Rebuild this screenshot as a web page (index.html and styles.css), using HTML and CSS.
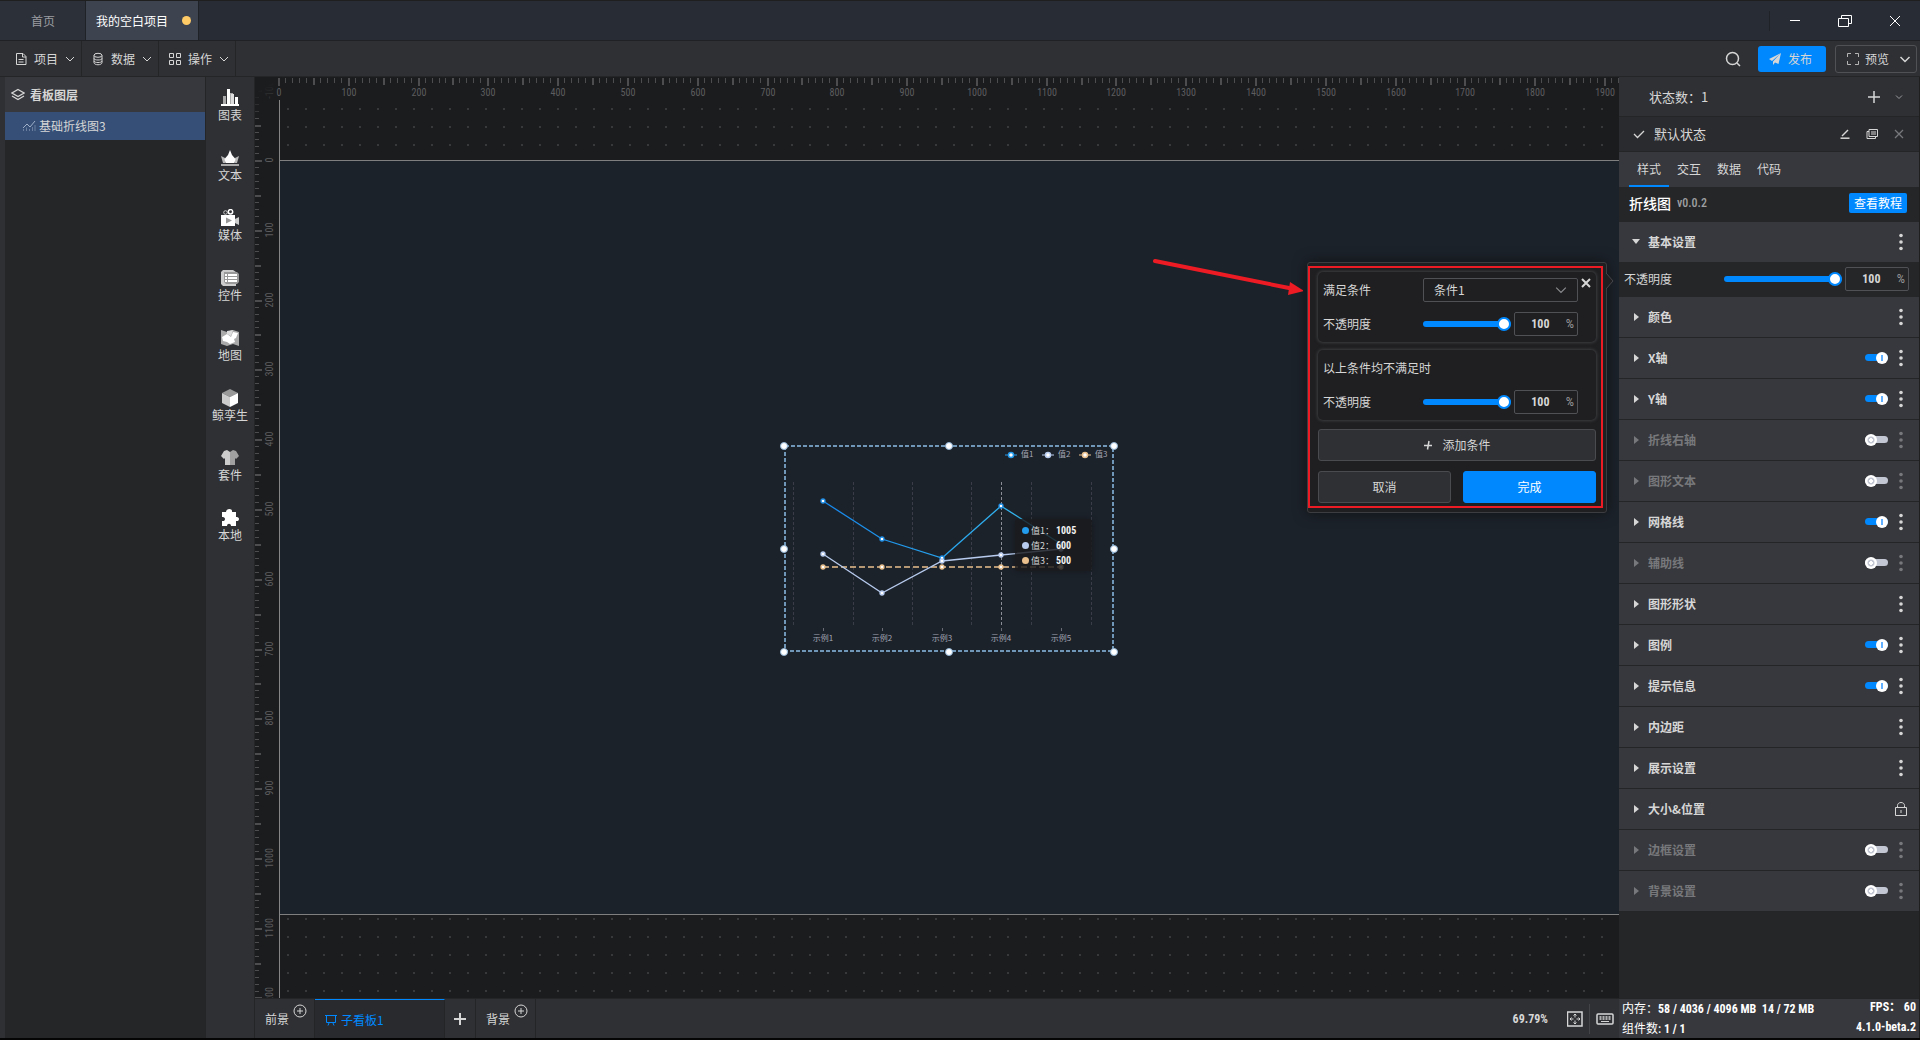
FILE: index.html
```html
<!DOCTYPE html>
<html lang="zh-CN">
<head>
<meta charset="utf-8">
<title>我的空白项目</title>
<link rel="stylesheet" href="styles.css">
</head>
<body>
<svg class="defs" width="0" height="0" aria-hidden="true">
  <symbol id="chevron" viewBox="0 0 10 10"><path d="M1 3l4 4 4-4" fill="none" stroke="currentColor"/></symbol>
  <symbol id="circle-plus" viewBox="0 0 14 14"><path d="M7 4v6M4 7h6" fill="none" stroke="currentColor"/><circle cx="7" cy="7" r="6" fill="none" stroke="currentColor"/></symbol>
  <symbol id="kebab" viewBox="0 0 4 18"><g fill="currentColor"><circle cx="2" cy="2.500" r="1.800"/><circle cx="2" cy="9" r="1.800"/><circle cx="2" cy="15.500" r="1.800"/></g></symbol>
</svg>

<header class="titlebar">
  <nav class="project-tabs">
    <a class="project-tab home" href="#">首页</a>
    <a class="project-tab active" href="#">我的空白项目<span class="unsaved"></span></a>
  </nav>
  <div class="window-buttons">
    <button aria-label="最小化"><svg width="14" height="14"><path d="M2 6.500h10" stroke="currentColor"/></svg></button>
    <button aria-label="还原"><svg width="16" height="14"><path d="M1.500 4.500h10v8h-10zM4.500 4v-2.500h10v8h-3" fill="none" stroke="currentColor"/></svg></button>
    <button aria-label="关闭"><svg width="14" height="14"><path d="M2 2l10 10M12 2L2 12" stroke="currentColor"/></svg></button>
  </div>
</header>

<div class="menubar">
  <button class="menu"><svg width="12" height="14"><path d="M1.500 1.500h6.500l3 3v8h-9.500zM7.500 1.500v3.500h3.500M3.500 7.500h5M3.500 10h5" fill="none" stroke="currentColor"/></svg>项目<svg width="10" height="10"><use href="#chevron"/></svg></button>
  <button class="menu"><svg width="12" height="14"><path d="M2 3.500v7c0 3 8 3 8 0v-7M2 6.500c0 2 8 2 8 0M2 9c0 2 8 2 8 0" fill="none" stroke="currentColor"/><ellipse cx="6" cy="3.300" rx="4" ry="2" fill="none" stroke="currentColor"/></svg>数据<svg width="10" height="10"><use href="#chevron"/></svg></button>
  <button class="menu"><svg width="12" height="12"><path d="M.5.500h4v4h-4zM7.500.500h4v4h-4zM.5 7.500h4v4h-4zM7.500 7.500h4v4h-4z" fill="none" stroke="currentColor"/></svg>操作<svg width="10" height="10"><use href="#chevron"/></svg></button>
  <div class="menubar-actions">
    <button class="search" aria-label="搜索"><svg width="18" height="18"><circle cx="8.500" cy="8.500" r="6" fill="none" stroke="currentColor" stroke-width="1.500"/><path d="M13 13l3 3" stroke="currentColor" stroke-width="1.500"/></svg></button>
    <button class="publish"><svg width="12" height="12"><path d="M12 0L0 6l3 2zM12 0L4 8.500V12l2-2.500 3.500 1.500z" fill="currentColor"/></svg>发布</button>
    <button class="preview"><svg width="12" height="12"><path d="M.5 4V.5H4M8 .5h3.500V4M11.500 8v3.500H8M4 11.500H.5V8" fill="none" stroke="currentColor" opacity=".8"/></svg>预览<svg class="preview-chevron" width="12" height="12"><path d="M1.500 4L6 8.500 10.500 4" fill="none" stroke="currentColor" stroke-width="1.500"/></svg></button>
  </div>
</div>

<div class="workspace">
  <aside class="layers">
    <h2 class="layers-title"><svg width="14" height="14"><path d="M7 1.500L13 5 7 8.500 1 5zM1 8l6 3.500L13 8" fill="none" stroke="currentColor" stroke-width="1.300"/></svg>看板图层</h2>
    <a class="layer" href="#"><svg width="14" height="12"><path d="M1 8l4-4 3 3 5-6" fill="none" stroke="currentColor"/><path d="M1.500 11V9M4.500 11V7.500M7.500 11V9M10.500 11V7M13 11V5" stroke="currentColor" opacity=".5"/></svg>基础折线图3</a>
  </aside>

  <nav class="toolbox">
    <button class="tool"><svg width="18" height="18"><path d="M0 15h18v2H0z" fill="#fff"/><path d="M2 7h3v8H2zM9 4h3v11H9z" fill="#aaa"/><path d="M6 0h3v15H6zM14 8h3v7h-3z" fill="#fff"/><path d="M10 5h3v10h-3z" fill="#ddd"/></svg>图表</button>
    <button class="tool"><svg width="18" height="18"><path d="M0 7l4 2v5H2zM18 7l-4 2v5h2z" fill="#bbb"/><path d="M9 1l2 5 3.500 4-1 4h-9l-1-4L7 6z" fill="#fff"/><path d="M0 15h18v2H0z" fill="#aaa"/></svg>文本</button>
    <button class="tool"><svg width="18" height="18"><circle cx="4.500" cy="3.500" r="1.800" fill="none" stroke="#ccc"/><circle cx="9.500" cy="2.800" r="2.200" fill="none" stroke="#fff" stroke-width="1.500"/><path d="M0 6h14v11H0z" fill="#fff"/><path d="M5 8.500v6L11 11.500z" fill="#999"/><path d="M14 10l4-2v8l-4-2z" fill="#ccc"/></svg>媒体</button>
    <button class="tool"><svg width="18" height="18"><path d="M2 1h10l3 2v14H2l-2-2V3z" fill="#ccc"/><path d="M3 3h13l2 2v8l-2 2H5l-2-2z" fill="#999"/><path d="M4 5h2v2H4zM7 5h9v2H7zM4 8h2v2H4zM7 8h9v2H7zM4 11h2v2H4zM7 11h9v2H7z" fill="#fff"/></svg>控件</button>
    <button class="tool"><svg width="18" height="18"><path d="M0 1l6 2 6-2 6 2v14l-6-2-6 2-6-2z" fill="#aaa"/><path d="M1 8l5-3 4 3 2-5 5 1-2 5-2 1 1 3-5 2-3-2-4-1z" fill="#fff"/><path d="M6 2l6-1-2 6-4-2z" fill="#ddd"/></svg>地图</button>
    <button class="tool"><svg width="18" height="18"><path d="M9 0l8 4-8 4-8-4z" fill="#999"/><path d="M1 4l8 4v10l-8-4z" fill="#ccc"/><path d="M17 4L9 8v10l8-4z" fill="#fff"/></svg>鲸孪生</button>
    <button class="tool"><svg width="18" height="18"><path d="M9 3L6 1 3 2 0 7l3 3 1-1v7h5z" fill="#ccc"/><path d="M9 3l3-2 3 1 3 5-3 3-1-1v7H9z" fill="#a0a0a0"/></svg>套件</button>
    <button class="tool"><svg width="18" height="18"><path d="M1 3h4c0-4 7-4 6 0h4v5c4-1 4 5 0 4v5h-5c0-3-4-3-4 0H1v-5c4 1 4-5 0-4z" fill="#fff"/></svg>本地</button>
  </nav>

  <div class="center">
    <main class="canvas">
      <div class="artboard"></div>
      <svg class="ruler ruler-y" aria-hidden="true"></svg>
      <svg class="ruler ruler-x" aria-hidden="true"></svg>
      <div class="ruler-corner"></div>

      <div class="widget">
        <svg class="chart" width="340" height="220">
          <defs><linearGradient id="series-blue" gradientUnits="userSpaceOnUse" x1="43" x2="281"><stop offset="0" stop-color="#1586ea"/><stop offset="1" stop-color="#39c0f0"/></linearGradient></defs>
          <rect x="5" y="6" width="328" height="205" fill="none" stroke="#7097b8" stroke-width="2" stroke-dasharray="4 2"/>
          <path d="M13.500 42v145M73.500 42v145M132.500 42v145M191.500 42v145M251.500 42v145M311.500 42v145" stroke="#3a3d48" stroke-dasharray="3 2"/>
          <path d="M221.500 42v145" stroke="#8b8e96" stroke-dasharray="3 2"/>
          <path d="M43.500 188v3M102.500 188v3M162.500 188v3M221.500 188v3M281.500 188v3" stroke="#6a6d76"/>
          <path d="M43 127h238" stroke="#e9c08d" stroke-width="1.300" stroke-dasharray="6 3"/>
          <path d="M43 114l59 39 60-32 59-6 60-6" fill="none" stroke="#b7cbee" stroke-width="1.300"/>
          <path d="M43 61l59 38 60 19 59-52 60 38" fill="none" stroke="url(#series-blue)" stroke-width="1.300"/>
          <g fill="#fff" stroke="#1f8fe8" stroke-width="1.300"><circle cx="43" cy="61" r="2"/><circle cx="102" cy="99" r="2"/><circle cx="162" cy="118" r="2"/><circle cx="221" cy="66" r="2"/><circle cx="281" cy="104" r="2"/></g>
          <g fill="#fff" stroke="#b7cbee" stroke-width="1.300"><circle cx="43" cy="114" r="2"/><circle cx="102" cy="153" r="2"/><circle cx="162" cy="121" r="2"/><circle cx="221" cy="115" r="2"/><circle cx="281" cy="109" r="2"/></g>
          <g fill="#fff" stroke="#e9c08d" stroke-width="1.300"><circle cx="43" cy="127" r="2"/><circle cx="102" cy="127" r="2"/><circle cx="162" cy="127" r="2"/><circle cx="221" cy="127" r="2"/><circle cx="281" cy="127" r="2"/></g>
          <g class="axis-text" text-anchor="middle"><text x="43" y="201">示例1</text><text x="102" y="201">示例2</text><text x="162" y="201">示例3</text><text x="221" y="201">示例4</text><text x="281" y="201">示例5</text></g>
          <path d="M225 15h12" stroke="#249ced"/><circle cx="231" cy="15" r="2.500" fill="#fff" stroke="#249ced" stroke-width="1.500"/>
          <path d="M262 15h12" stroke="#b7cbee"/><circle cx="268" cy="15" r="2.500" fill="#fff" stroke="#b7cbee" stroke-width="1.500"/>
          <path d="M299 15h12" stroke="#e9c08d"/><circle cx="305" cy="15" r="2.500" fill="#fff" stroke="#e9c08d" stroke-width="1.500"/>
          <g class="axis-text"><text x="241" y="17">值1</text><text x="278" y="17">值2</text><text x="315" y="17">值3</text></g>
          <g fill="#fff" stroke="#8fb3d4"><circle cx="4" cy="6" r="3.500"/><circle cx="169" cy="6" r="3.500"/><circle cx="334" cy="6" r="3.500"/><circle cx="4" cy="109" r="3.500"/><circle cx="334" cy="109" r="3.500"/><circle cx="4" cy="212" r="3.500"/><circle cx="169" cy="212" r="3.500"/><circle cx="334" cy="212" r="3.500"/></g>
        </svg>
        <ul class="tooltip">
          <li><span class="swatch blue"></span>值1：<b>1005</b></li>
          <li><span class="swatch pale"></span>值2：<b>600</b></li>
          <li><span class="swatch sand"></span>值3：<b>500</b></li>
        </ul>
      </div>

      <form class="popover">
        <fieldset class="card">
          <div class="field"><label for="cond">满足条件</label><span class="select-wrap"><select id="cond"><option>条件1</option></select><svg width="12" height="12"><use href="#chevron"/></svg></span></div>
          <div class="field"><label for="op1">不透明度</label><input class="slider" id="op1" type="range" value="100"><span class="percent"><input type="text" value="100" aria-label="不透明度数值">%</span></div>
        </fieldset>
        <fieldset class="card">
          <p class="field">以上条件均不满足时</p>
          <div class="field"><label for="op2">不透明度</label><input class="slider" id="op2" type="range" value="100"><span class="percent"><input type="text" value="100" aria-label="不透明度数值">%</span></div>
        </fieldset>
        <button class="btn add" type="button"><svg width="10" height="10"><path d="M1 5.500h8M6 1L4.500 9.500" stroke="currentColor" stroke-width="1.500"/></svg>添加条件</button>
        <div class="popover-actions">
          <button class="btn" type="button">取消</button>
          <button class="btn primary" type="button">完成</button>
        </div>
        <button class="popover-close" type="button" aria-label="关闭"><svg width="10" height="10"><path d="M1 1l8 8M9 1L1 9" stroke="currentColor" stroke-width="2"/></svg></button>
        <svg class="popover-tip" width="8" height="16"><path d="M0 0l7 8-7 8z" fill="#1f1f21"/><path d="M0 0l7 8-7 8" fill="none" stroke="#46474b"/></svg>
        <span class="highlight"></span>
      </form>
      <svg class="red-arrow" width="152" height="40"><path d="M4 5l134 27" stroke="#ed1c24" stroke-width="4" stroke-linecap="round"/><path d="M139 26l14 9-16 4z" fill="#ed1c24"/></svg>
    </main>

    <footer class="boardbar">
      <a class="board" href="#">前景<svg class="board-add" width="14" height="14"><use href="#circle-plus"/></svg></a>
      <a class="board current" href="#"><svg width="12" height="12"><path d="M0 1.500h12M1.500 1.500v7h9v-7M4 9l-1 2.500M8 9l1 2.500" fill="none" stroke="currentColor"/></svg>子看板1</a>
      <button class="board-new" aria-label="新建"><svg width="12" height="12"><path d="M6 0v12M0 6h12" stroke="currentColor" stroke-width="2"/></svg></button>
      <a class="board" href="#">背景<svg class="board-add" width="14" height="14"><use href="#circle-plus"/></svg></a>
      <div class="zoom-tools">
        <span class="num zoom-value">69.79%</span>
        <button aria-label="适应画布"><svg width="16" height="16"><rect x=".5" y="1" width="14.500" height="14" fill="none" stroke="currentColor" stroke-width="1.500"/><path d="M8 3v3.500M8 9.500V13M3 8h3.500M9.500 8H13M6.500 4.500L8 3l1.500 1.500M6.500 11.500L8 13l1.500-1.500M4.500 6.500L3 8l1.500 1.500M11.500 6.500L13 8l-1.500 1.500" fill="none" stroke="currentColor"/></svg></button>
        <span class="zoom-divider"></span>
        <button aria-label="快捷键"><svg width="18" height="12"><rect x="1" y="1" width="16" height="10" rx="1" fill="none" stroke="currentColor" stroke-width="1.500"/><path d="M3.500 4h11M3.500 6h11" stroke="currentColor" stroke-width="1.300" stroke-dasharray="2 1"/><path d="M5 8.500h8" stroke="currentColor"/></svg></button>
      </div>
    </footer>
  </div>

  <aside class="inspector">
    <div class="states"><span>状态数：<span class="state-count">1</span></span><button aria-label="添加状态"><svg width="14" height="14"><path d="M7 1v12M1 7h12" stroke="currentColor" stroke-width="1.500"/></svg></button><button aria-label="展开"><svg width="8" height="8"><path d="M1 2.500l3 3 3-3" fill="none" stroke="#9a9b9d"/></svg></button></div>
    <div class="state-row"><svg width="12" height="12"><path d="M1 6l3.500 3.500L11 3" fill="none" stroke="currentColor" stroke-width="1.300"/></svg><span>默认状态</span><button aria-label="重命名"><svg width="10" height="10"><path d="M.5 9.200h9" stroke="currentColor" stroke-width="1.500"/><path d="M2 7l6-6" stroke="currentColor" stroke-width="1.500"/></svg></button><button aria-label="复制"><svg width="12" height="10"><path d="M3 .5h8.500v7H3zM3 2.500H1v7h8.500v-2M5 3h5M5 5h5" fill="none" stroke="currentColor"/></svg></button><button aria-label="删除"><svg class="dim" width="10" height="10"><path d="M1 1l8 8M9 1L1 9" stroke="currentColor" stroke-width="1.300"/></svg></button></div>
    <nav class="tabs"><a class="tab selected" href="#">样式</a><a class="tab" href="#">交互</a><a class="tab" href="#">数据</a><a class="tab" href="#">代码</a></nav>
    <div class="component"><h2>折线图</h2><span class="num version">v0.0.2</span><button class="tutorial">查看教程</button></div>
    <div class="sections">
      <div class="section open"><button class="caption">基本设置</button><button class="more" aria-label="更多"><svg width="4" height="18"><use href="#kebab"/></svg></button></div>
      <div class="opacity-row"><label for="op0">不透明度</label><input class="slider" id="op0" type="range" value="100"><span class="percent"><input type="text" value="100" aria-label="不透明度数值">%</span></div>
      <div class="section"><button class="caption">颜色</button><button class="more" aria-label="更多"><svg width="4" height="18"><use href="#kebab"/></svg></button></div>
      <div class="section"><button class="caption">X轴</button><input class="switch" type="checkbox" aria-label="X轴" checked><button class="more" aria-label="更多"><svg width="4" height="18"><use href="#kebab"/></svg></button></div>
      <div class="section"><button class="caption">Y轴</button><input class="switch" type="checkbox" aria-label="Y轴" checked><button class="more" aria-label="更多"><svg width="4" height="18"><use href="#kebab"/></svg></button></div>
      <div class="section off"><button class="caption">折线右轴</button><input class="switch" type="checkbox" aria-label="折线右轴"><button class="more" aria-label="更多"><svg width="4" height="18"><use href="#kebab"/></svg></button></div>
      <div class="section off"><button class="caption">图形文本</button><input class="switch" type="checkbox" aria-label="图形文本"><button class="more" aria-label="更多"><svg width="4" height="18"><use href="#kebab"/></svg></button></div>
      <div class="section"><button class="caption">网格线</button><input class="switch" type="checkbox" aria-label="网格线" checked><button class="more" aria-label="更多"><svg width="4" height="18"><use href="#kebab"/></svg></button></div>
      <div class="section off"><button class="caption">辅助线</button><input class="switch" type="checkbox" aria-label="辅助线"><button class="more" aria-label="更多"><svg width="4" height="18"><use href="#kebab"/></svg></button></div>
      <div class="section"><button class="caption">图形形状</button><button class="more" aria-label="更多"><svg width="4" height="18"><use href="#kebab"/></svg></button></div>
      <div class="section"><button class="caption">图例</button><input class="switch" type="checkbox" aria-label="图例" checked><button class="more" aria-label="更多"><svg width="4" height="18"><use href="#kebab"/></svg></button></div>
      <div class="section"><button class="caption">提示信息</button><input class="switch" type="checkbox" aria-label="提示信息" checked><button class="more" aria-label="更多"><svg width="4" height="18"><use href="#kebab"/></svg></button></div>
      <div class="section"><button class="caption">内边距</button><button class="more" aria-label="更多"><svg width="4" height="18"><use href="#kebab"/></svg></button></div>
      <div class="section"><button class="caption">展示设置</button><button class="more" aria-label="更多"><svg width="4" height="18"><use href="#kebab"/></svg></button></div>
      <div class="section"><button class="caption">大小&amp;位置</button><button class="more" aria-label="锁定"><svg width="12" height="14"><path d="M.5 5.500h11v8H.5zM2.500 5V3.500c0-4 7-4 7 0V5M6 8v3" fill="none" stroke="currentColor"/></svg></button></div>
      <div class="section off"><button class="caption">边框设置</button><input class="switch" type="checkbox" aria-label="边框设置"><button class="more" aria-label="更多"><svg width="4" height="18"><use href="#kebab"/></svg></button></div>
      <div class="section off"><button class="caption">背景设置</button><input class="switch" type="checkbox" aria-label="背景设置"><button class="more" aria-label="更多"><svg width="4" height="18"><use href="#kebab"/></svg></button></div>
    </div>
    <footer class="stats">
      <div class="stat-line"><span>内存：<span class="num">58 / 4036 / 4096 MB&nbsp; 14 / 72 MB</span></span><span class="num">FPS： 60</span></div>
      <div class="stat-line"><span>组件数: <span class="num">1 / 1</span></span><span class="num">4.1.0-beta.2</span></div>
    </footer>
  </aside>
</div>
<script src="rulers.js"></script>
</body>
</html>
```

FILE: styles.css
```css
* { box-sizing: border-box; }

:root {
  --bar: #2f3034;
  --raised: #37383d;
  --sunken: #252628;
  --line: #242527;
  --blue: #0089ff;
  --text: #d6d6d6;
  --dim: #77787b;
  --cjk: "Noto Sans CJK SC", sans-serif;
  --digits: "Roboto Condensed", Roboto, "Noto Sans CJK SC", sans-serif;
}

body {
  margin: 0;
  height: 100vh;
  display: flex;
  flex-direction: column;
  background: #1f1f20;
  border-top: 1px solid #1f1f20;
  border-bottom: 2px solid #050505;
  color: var(--text);
  font: 12px/18px var(--cjk);
  overflow: hidden;
}

button {
  display: flex;
  align-items: center;
  justify-content: center;
  padding: 0;
  border: 0;
  background: none;
  color: inherit;
  font: inherit;
}

a { color: inherit; text-decoration: none; }
h2, p, ul, fieldset { margin: 0; padding: 0; border: 0; list-style: none; }
svg { display: block; flex: none; }
.defs { position: absolute; }
.num { font-family: var(--digits); font-size: 12px; font-weight: 700; }
.dim { color: var(--dim); }

/* Title bar */
.titlebar {
  display: flex;
  justify-content: space-between;
  height: 40px;
  flex: none;
  background: #282c34;
  border-bottom: 1px solid #202124;
}
.project-tabs { display: flex; }
.project-tab {
  display: flex;
  align-items: center;
  gap: 14px;
  padding: 0 10px;
  border-right: 1px solid #1f2226;
}
.project-tab.home { padding: 0 30px 0 31px; background: #2c3038; color: #9b9da2; }
.project-tab.active { padding-right: 7px; background: #3e4350; color: #fff; }
.unsaved { width: 9px; height: 9px; border-radius: 50%; background: #ffcb66; }
.window-buttons { display: flex; align-items: center; color: #fff; }
.window-buttons::before { content: ""; width: 1px; height: 20px; background: #1f2226; }
.window-buttons button { width: 50px; height: 40px; }

/* Menu bar */
.menubar {
  display: flex;
  height: 36px;
  flex: none;
  padding-left: 5px;
  background: var(--bar);
  border-bottom: 1px solid var(--line);
}
.menu {
  gap: 7px;
  padding: 0 6px 0 10px;
  border-right: 1px solid var(--line);
}
.menubar-actions { display: flex; align-items: center; gap: 9px; margin-left: auto; padding-right: 3px; }
.search { margin-right: 7px; }
.publish { width: 68px; height: 26px; gap: 7px; padding-right: 3px; border-radius: 3px; background: var(--blue); }
.preview { width: 82px; height: 28px; gap: 6px; padding-left: 6px; border: 1px solid #505155; border-radius: 3px; }
.preview-chevron { margin-left: 4px; }

/* Workspace columns */
.workspace { flex: 1; min-height: 0; display: flex; padding-left: 5px; background: var(--bar); }
.layers { width: 200px; flex: none; background: var(--sunken); }
.layers-title {
  display: flex;
  align-items: center;
  gap: 5px;
  height: 35px;
  padding-left: 6px;
  background: var(--raised);
  font-size: 12px;
}
.layer {
  display: flex;
  align-items: center;
  gap: 3px;
  height: 28px;
  padding-left: 17px;
  background: #354f77;
}
.layer svg { color: #9fb0c8; }
.toolbox {
  display: flex;
  flex-direction: column;
  gap: 24px;
  width: 50px;
  flex: none;
  padding-top: 12px;
  border-left: 1px solid var(--line);
  border-right: 1px solid var(--line);
}
.tool { flex-direction: column; justify-content: flex-start; height: 36px; line-height: 16px; }

/* Canvas */
.center { flex: 1; min-width: 0; display: flex; flex-direction: column; }
.canvas {
  position: relative;
  flex: 1;
  overflow: hidden;
  background: radial-gradient(circle at 1px 1px, #38393b 1px, transparent 1px) 32px 13px / 18px 18px #1b1c1e;
}
.artboard {
  position: absolute;
  left: 24px;
  top: 83px;
  right: 0;
  bottom: 83px;
  background: #1c222a;
  border-top: 1px solid #7f7f7f;
  border-bottom: 1px solid #7f7f7f;
}
.canvas::before {
  content: "";
  position: absolute;
  left: 24px;
  top: 23px;
  bottom: 0;
  width: 1px;
  background: #858585;
  z-index: 1;
}
.ruler { position: absolute; left: 0; top: 0; }
.ruler-x {
  width: 100%;
  height: 24px;
  background: linear-gradient(#1b1c1e, #1b1c1e) 24px 0 no-repeat;
}
.ruler-y { width: 24px; height: 100%; background: #1b1c1e; }
.ruler text { fill: #5d5d5f; font: 10px/12px var(--digits); text-anchor: middle; }
.ruler rect { fill: #4d4c4e; }
.ruler-corner {
  position: absolute;
  left: 0;
  top: 0;
  width: 20px;
  height: 40px;
  background: linear-gradient(150deg, #1b1c1e 30%, transparent);
}

.widget { position: absolute; left: 525px; top: 363px; }
.axis-text { fill: #a2a5b3; font: 8px var(--cjk); }
.tooltip {
  position: absolute;
  left: 235px;
  top: 79px;
  width: 77px;
  padding: 4px 0 3px 7px;
  border-radius: 3px;
  background: rgba(26, 26, 28, .82);
  box-shadow: 0 0 6px rgba(0, 0, 0, .3);
  font-size: 9px;
  line-height: 15px;
}
.tooltip li { display: flex; align-items: center; gap: 2px; }
.tooltip b { font-family: var(--digits); font-size: 10px; color: #f2f2f2; }
.swatch { width: 7px; height: 7px; border-radius: 50%; }
.blue { background: #249ced; }
.pale { background: #b7cbee; }
.sand { background: #e9c08d; }

/* Condition popover */
.popover {
  position: absolute;
  top: 185px;
  right: 12px;
  width: 300px;
  padding: 9px 10px;
  border: 1px solid #3c3d40;
  border-radius: 3px;
  background: #1f1f21;
  box-shadow: 0 0 14px rgba(0, 0, 0, .5);
}
.card {
  min-width: 0;
  height: 70px;
  margin-bottom: 8px;
  padding: 6px 18px 0 5px;
  border-radius: 5px;
  box-shadow: 0 0 3px 1px #3c3d40;
}
.card .field { display: flex; align-items: center; height: 24px; margin-bottom: 10px; }
.card label { width: 100px; }
.select-wrap { position: relative; flex: 1; }
.select-wrap svg { position: absolute; right: 11px; top: 6px; color: #8b8c8f; pointer-events: none; }
select {
  display: block;
  width: 100%;
  height: 24px;
  padding: 0 10px;
  appearance: none;
  border: 1px solid #505155;
  border-radius: 2px;
  background: transparent;
  color: var(--text);
  font: inherit;
}
.slider {
  flex: 1;
  min-width: 0;
  height: 14px;
  margin: 0 3px 0 0;
  appearance: none;
  background: transparent;
}
.slider::-webkit-slider-runnable-track { height: 6px; border-radius: 3px; background: var(--blue); }
.slider::-webkit-slider-thumb {
  appearance: none;
  width: 14px;
  height: 14px;
  margin-top: -4px;
  border: 2px solid var(--blue);
  border-radius: 50%;
  background: #fff;
}
.percent {
  display: flex;
  align-items: center;
  width: 64px;
  height: 24px;
  flex: none;
  padding-right: 3px;
  border: 1px solid #505155;
  border-radius: 2px;
  color: #98999b;
  font-family: var(--digits);
  font-size: 13px;
}
.percent input {
  flex: 1;
  min-width: 0;
  padding: 0;
  border: 0;
  background: transparent;
  color: var(--text);
  font: 700 12px/16px var(--digits);
  text-align: center;
}
.btn {
  width: 100%;
  height: 32px;
  gap: 9px;
  border: 1px solid #4a4b4f;
  border-radius: 3px;
  background: var(--bar);
}
.add { margin-top: 9px; }
.primary { border-color: var(--blue); background: var(--blue); color: #fff; }
.popover-actions { display: flex; gap: 12px; margin-top: 10px; }
.popover-close { position: absolute; right: 15px; top: 15px; }
.popover-tip { position: absolute; right: -8px; top: 10px; }
.highlight { position: absolute; inset: 3px 3px 4px 0; border: 2px solid #ed1c24; pointer-events: none; }
.red-arrow { position: absolute; right: 316px; top: 179px; }

/* Board tabs */
.boardbar {
  display: flex;
  height: 40px;
  flex: none;
  border-top: 1px solid var(--line);
  background: var(--bar);
}
.board {
  display: flex;
  align-items: center;
  gap: 4px;
  padding: 1px 7px 0 10px;
  border-right: 1px solid var(--line);
}
.board-add { margin-bottom: 16px; }
.board.current {
  width: 130px;
  border-top: 1px solid var(--blue);
  background: #282a2e;
  color: var(--blue);
}
.board-new { width: 31px; border-right: 1px solid var(--line); }
.zoom-tools { display: flex; align-items: center; gap: 6px; margin-left: auto; padding-right: 5px; }
.zoom-value { margin-right: 13px; }
.zoom-divider { width: 1px; height: 30px; background: #434448; }

/* Inspector */
.inspector {
  display: flex;
  flex-direction: column;
  width: 301px;
  flex: none;
  border-right: 1px solid #1f1f20;
  background: var(--sunken);
}
.states, .state-row { display: flex; align-items: center; font-size: 13px; flex: none; }
.states { height: 39px; padding-right: 16px; gap: 14px; background: var(--bar); }
.states > span { flex: 1; padding-left: 30px; }
.state-row { height: 36px; padding: 0 15px 0 14px; gap: 16px; background: #2a2b2e; border-top: 1px solid var(--line); border-bottom: 1px solid var(--line); }
.state-row span { flex: 1; margin-left: -7px; }
.tabs { display: flex; height: 35px; flex: none; padding-left: 10px; background: var(--raised); }
.tab { display: flex; align-items: center; padding: 0 8px; border-bottom: 2px solid transparent; }
.tab.selected { border-color: var(--blue); }
.component { display: flex; align-items: center; gap: 6px; height: 35px; flex: none; padding: 0 12px 3px 10px; }
.component h2 { font-size: 14px; font-weight: 500; color: #fff; }
.version { font-weight: 500; color: #9fa0a2; }
.tutorial { margin-left: auto; height: 20px; padding: 0 5px; border-radius: 2px; background: var(--blue); color: #fff; }

.sections { flex: 1; min-height: 0; overflow: hidden; }
.section {
  display: flex;
  align-items: center;
  gap: 11px;
  height: 41px;
  padding: 0 16px 1px 0;
  border-bottom: 1px solid var(--line);
  background: var(--raised);
}
.section.open { height: 40px; border-bottom: 0; }
.section.off { color: var(--dim); }
.caption { flex: 1; justify-content: flex-start; height: 100%; padding-left: 15px; gap: 9px; font-weight: 700; }
.caption::before {
  content: "";
  border: solid transparent;
  border-width: 4px 0 4px 5px;
  border-left-color: currentColor;
}
.open .caption { padding-left: 13px; gap: 8px; }
.open .caption::before { border-width: 5px 4px 0; border-top-color: currentColor; border-left-color: transparent; }
.more { width: 4px; }
.opacity-row { display: flex; align-items: center; height: 35px; padding: 0 10px 2px 5px; }
.opacity-row label { width: 100px; }

.switch {
  display: grid;
  align-items: center;
  width: 23px;
  height: 12px;
  margin: 0;
  appearance: none;
}
.switch::before, .switch::after { content: ""; grid-area: 1 / 1; }
.switch::before { width: 23px; height: 7px; border-radius: 4px; background: #c3c7d4; }
.switch::after {
  width: 12px;
  height: 12px;
  border-radius: 50%;
  background: radial-gradient(circle, #fff 2px, #c3c7d4 2px 3px, #fff 4px);
}
.switch:checked::before { background: var(--blue); }
.switch:checked::after { justify-self: end; background: linear-gradient(#60b0ff, #60b0ff) center / 2px 6px no-repeat #fff; }

.stats {
  flex: none;
  height: 40px;
  padding: 0 3px;
  border-top: 1px solid var(--line);
  background: var(--raised);
  color: #fff;
}
.stat-line { display: flex; justify-content: space-between; height: 20px; line-height: 17px; }
```

FILE: rulers.js
```js
// Draws the horizontal and vertical canvas rulers for the current zoom level.
const NS = 'http://www.w3.org/2000/svg';
const ZOOM = 0.6979;

function add(svg, name, attrs, text) {
  const node = document.createElementNS(NS, name);
  for (const key in attrs) node.setAttribute(key, attrs[key]);
  if (text !== undefined) node.textContent = text;
  svg.appendChild(node);
}

function draw(selector, origin, vertical) {
  const svg = document.querySelector(selector);
  const box = svg.getBoundingClientRect();
  const length = vertical ? box.height : box.width;
  svg.replaceChildren();
  const first = vertical ? -100 : 0;
  for (let v = first; origin + v * ZOOM < length; v += 10) {
    const pos = Math.round(origin + v * ZOOM);
    const size = v % 100 === 0 ? 8 : v % 50 === 0 ? 7 : 5;
    const thick = v % 50 === 0 ? 2 : 1;
    if (vertical) {
      add(svg, 'rect', { x: 0, y: pos, width: size - 1, height: thick });
    } else {
      add(svg, 'rect', { x: pos - 1, y: 1, width: thick, height: size });
    }
    if (v % 100 === 0) {
      const attrs = vertical
        ? { transform: `translate(18 ${pos}) rotate(-90)` }
        : { x: pos, y: 19 };
      add(svg, 'text', attrs, v);
    }
  }
}

function drawAll() {
  draw('.ruler-x', 24, false);
  draw('.ruler-y', 83, true);
}

drawAll();
addEventListener('resize', drawAll);
```
